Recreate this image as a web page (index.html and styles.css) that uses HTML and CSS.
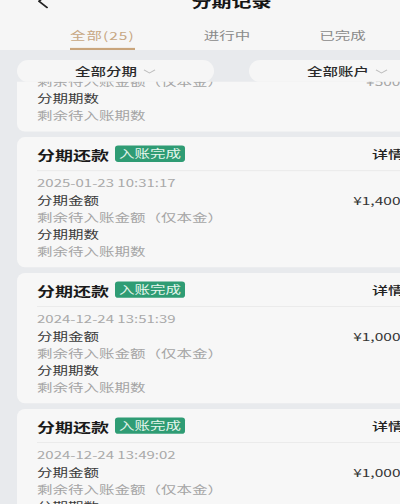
FILE: index.html
```html
<!DOCTYPE html>
<html lang="zh-CN">
<head>
    <meta charset="UTF-8">
    <title>分期记录</title>
    <link rel="stylesheet" href="styles.css">
</head>
<body>
    <div class="page">
        <header class="topbar">
            <div class="titlebar">
                <a href="javascript:" class="back">
                    <svg width="12" height="22" viewBox="0 0 12 22"><path d="M10 2 L2 11 L10 20" fill="none" stroke="#222" stroke-width="2" stroke-linecap="round" stroke-linejoin="round"/></svg>
                </a>
                <h1>分期记录</h1>
                <span></span>
            </div>
            <ul class="tabs">
                <li class="on">全部(25)</li>
                <li>进行中</li>
                <li>已完成</li>
            </ul>
        </header>

        <div class="filters">
            <div class="pill">全部分期
                <svg width="13" height="10" viewBox="0 0 13 10"><path d="M1 3 L6.5 7.5 L12 3" fill="none" stroke="#bdbdbd" stroke-width="1.3"/></svg>
            </div>
            <div class="pill">全部账户
                <svg width="13" height="10" viewBox="0 0 13 10"><path d="M1 3 L6.5 7.5 L12 3" fill="none" stroke="#bdbdbd" stroke-width="1.3"/></svg>
            </div>
        </div>

        <div class="list">
            <div class="card first">
                <div class="card-head">
                    <span class="name">分期还款</span>
                    <span class="badge">入账完成</span>
                    <span class="detail">详情 <svg width="8" height="14" viewBox="0 0 8 14"><path d="M1.5 2 L6.5 7 L1.5 12" fill="none" stroke="#222" stroke-width="1.5"/></svg></span>
                </div>
                <div class="card-body">
                    <div class="row date">2025-02-10 09:12:45</div>
                    <div class="row label"><span>分期金额</span><span class="amount">¥1,500.00</span></div>
                    <div class="row sub"><span>剩余待入账金额（仅本金）</span><span>¥500.00</span></div>
                    <div class="row label"><span>分期期数</span></div>
                    <div class="row sub"><span>剩余待入账期数</span></div>
                </div>
            </div>

            <div class="card">
                <div class="card-head">
                    <span class="name">分期还款</span>
                    <span class="badge">入账完成</span>
                    <span class="detail">详情 <svg width="8" height="14" viewBox="0 0 8 14"><path d="M1.5 2 L6.5 7 L1.5 12" fill="none" stroke="#222" stroke-width="1.5"/></svg></span>
                </div>
                <div class="card-body">
                    <div class="row date">2025-01-23 10:31:17</div>
                    <div class="row label"><span>分期金额</span><span class="amount">¥1,400.00</span></div>
                    <div class="row sub"><span>剩余待入账金额（仅本金）</span></div>
                    <div class="row label"><span>分期期数</span></div>
                    <div class="row sub"><span>剩余待入账期数</span></div>
                </div>
            </div>

            <div class="card">
                <div class="card-head">
                    <span class="name">分期还款</span>
                    <span class="badge">入账完成</span>
                    <span class="detail">详情 <svg width="8" height="14" viewBox="0 0 8 14"><path d="M1.5 2 L6.5 7 L1.5 12" fill="none" stroke="#222" stroke-width="1.5"/></svg></span>
                </div>
                <div class="card-body">
                    <div class="row date">2024-12-24 13:51:39</div>
                    <div class="row label"><span>分期金额</span><span class="amount">¥1,000.00</span></div>
                    <div class="row sub"><span>剩余待入账金额（仅本金）</span></div>
                    <div class="row label"><span>分期期数</span></div>
                    <div class="row sub"><span>剩余待入账期数</span></div>
                </div>
            </div>

            <div class="card">
                <div class="card-head">
                    <span class="name">分期还款</span>
                    <span class="badge">入账完成</span>
                    <span class="detail">详情 <svg width="8" height="14" viewBox="0 0 8 14"><path d="M1.5 2 L6.5 7 L1.5 12" fill="none" stroke="#222" stroke-width="1.5"/></svg></span>
                </div>
                <div class="card-body">
                    <div class="row date">2024-12-24 13:49:02</div>
                    <div class="row label"><span>分期金额</span><span class="amount">¥1,000.00</span></div>
                    <div class="row sub"><span>剩余待入账金额（仅本金）</span></div>
                    <div class="row label"><span>分期期数</span></div>
                    <div class="row sub"><span>剩余待入账期数</span></div>
                </div>
            </div>
        </div>
    </div>
</body>
</html>
```

FILE: styles.css
```css
*{
    margin: 0;
    padding: 0;
    list-style: none;
    box-sizing: border-box;
}
html, body{
    height: 504px;
    overflow: hidden;
    background: #e8eaed;
}
/* the screenshot is squashed vertically, so the whole page is scaled */
.page{
    width: 463px;
    transform: scaleY(0.708);
    transform-origin: 0 0;
    font-family: "Noto Sans CJK SC", "Noto Sans", sans-serif;
    color: #333;
}

/* top bar */
.topbar{
    background: #f6f6f6;
}
.titlebar{
    display: grid;
    grid-template-columns: 1fr auto 1fr;
    align-items: center;
    height: 40px;
    margin-top: -13px;
}
.back{
    display: flex;
    padding-left: 37px;
}
.titlebar h1{
    font-size: 20px;
    font-weight: bold;
    line-height: 40px;
    color: #151515;
}
.tabs{
    display: flex;
    gap: 69px;
    height: 49px;
    padding-left: 70px;
}
.tabs li{
    font-size: 15.5px;
    line-height: 20px;
    padding-top: 18px;
    padding-bottom: 8px;
    border-bottom: 3px solid transparent;
    color: #8a8a8a;
}
.tabs .on{
    color: #c7a783;
    letter-spacing: 1px;
    border-bottom-color: #c9a57c;
}

/* filters */
.filters{
    display: flex;
    gap: 35px;
    padding: 14px 17px 0;
}
.pill{
    display: flex;
    align-items: center;
    justify-content: center;
    gap: 6px;
    width: 197px;
    height: 31px;
    border-radius: 11px / 15.5px;
    background: #f6f6f6;
    font-size: 15.5px;
    font-weight: 500;
    color: #2a2a2a;
}

/* list */
.list{
    overflow: hidden;
    padding: 0 17px;
}
.card{
    height: 184px;
    margin-bottom: 8px;
    border-radius: 8px / 11px;
    background: #f7f7f7;
    overflow: hidden;
}
.card.first{
    margin-top: -114px;
}
.card-head{
    display: flex;
    align-items: center;
    height: 48px;
    margin: 0 24px 0 20px;
    border-bottom: 1.4px solid #e6e6e6;
}
.name{
    font-size: 18px;
    font-weight: bold;
    color: #1a1a1a;
}
.badge{
    margin-left: 6px;
    padding: 0 4px;
    font-size: 15.5px;
    line-height: 22.6px;
    color: #e4f5ec;
    background: #2f9c74;
    border-radius: 3px / 4px;
}
.detail{
    display: flex;
    align-items: center;
    gap: 6px;
    margin-left: auto;
    margin-right: 4px;
    font-size: 16px;
    font-weight: 500;
    color: #222;
}
.card-body{
    padding: 5px 24px 0 20px;
}
.row{
    display: flex;
    justify-content: space-between;
    font-size: 15.5px;
    line-height: 24px;
}
.date{
    font-size: 15px;
    color: #a9a9a9;
}
.label{
    color: #3a3a3a;
}
.sub{
    color: #a5a5a5;
}
.amount{
    color: #333;
}
```
